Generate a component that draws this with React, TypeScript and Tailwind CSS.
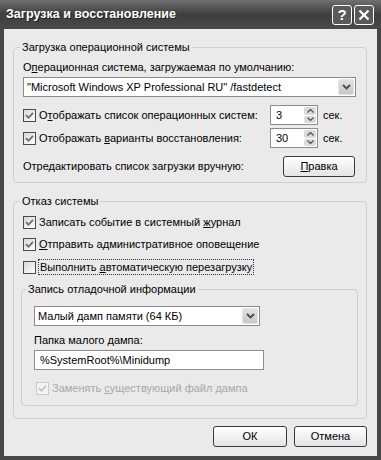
import React from "react";

function Check({ checked, disabled }: { checked?: boolean; disabled?: boolean }) {
  return (
    <span
      className={
        disabled
          ? "flex h-[13px] w-[13px] shrink-0 items-center justify-center border border-[#cacaca] bg-[#f3f3f3]"
          : "flex h-[13px] w-[13px] shrink-0 items-center justify-center border border-[#4a4a4a] bg-gradient-to-br from-[#d8d8d8] to-white"
      }
    >
      {checked && (
        <svg width="9" height="9" viewBox="0 0 9 9">
          <path
            d="M1 4.2 L3.5 6.8 L8 1.8"
            stroke={disabled ? "#c4c4c4" : "#6c6c6c"}
            strokeWidth="1.8"
            fill="none"
          />
        </svg>
      )}
    </span>
  );
}

function Combo({ text, width }: { text: string; width: string }) {
  return (
    <div className={`flex h-[20px] border border-[#8c8c8c] bg-white ${width}`}>
      <span className="flex-1 truncate pl-[3px] leading-[18px]">{text}</span>
      <span className="m-px flex w-[16px] items-center justify-center rounded-[2px] border border-[#e4e4e4] bg-gradient-to-b from-[#e2e2e2] to-[#c8c8c8]">
        <svg width="9" height="6" viewBox="0 0 9 6">
          <path d="M1 1 L4.5 4.5 L8 1" stroke="#4a4a4a" strokeWidth="1.8" fill="none" />
        </svg>
      </span>
    </div>
  );
}

function Spin({ value }: { value: string }) {
  return (
    <div className="flex h-[20px] w-[48px] border border-[#8c8c8c] bg-white">
      <span className="flex-1 pl-[5px] leading-[18px]">{value}</span>
      <div className="flex w-[14px] flex-col gap-px p-px">
        <span className="flex flex-1 items-center justify-center rounded-[2px] bg-[#dadada]">
          <svg width="7" height="4" viewBox="0 0 7 4">
            <path d="M0.5 3.5 L3.5 0.5 L6.5 3.5" stroke="#555" strokeWidth="1.3" fill="none" />
          </svg>
        </span>
        <span className="flex flex-1 items-center justify-center rounded-[2px] bg-[#dadada]">
          <svg width="7" height="4" viewBox="0 0 7 4">
            <path d="M0.5 0.5 L3.5 3.5 L6.5 0.5" stroke="#555" strokeWidth="1.3" fill="none" />
          </svg>
        </span>
      </div>
    </div>
  );
}

function Btn({ children, width }: { children: React.ReactNode; width: string }) {
  return (
    <div
      className={`flex h-[21px] items-center justify-center rounded-[3px] border border-[#3a3a3a] bg-gradient-to-b from-white to-[#e4e4e4] ${width}`}
    >
      {children}
    </div>
  );
}

export default function App() {
  return (
    <div className="flex h-[460px] w-[381px] flex-col overflow-hidden bg-[#474747] font-['Liberation_Sans',Arial,sans-serif] text-[11px] text-black">
      <div className="flex h-[29px] shrink-0 items-center bg-gradient-to-b from-[#707070] via-[#3e3e3e] to-[#4a4a4a] pl-[6px] pr-[7px]">
        <span className="flex-1 text-[12.5px] font-bold text-white [text-shadow:1px_1px_0_#222]">
          Загрузка и восстановление
        </span>
        <div className="flex gap-[2px]">
          <span className="flex h-[20px] w-[20px] items-center justify-center rounded-[3px] border border-white bg-[#5a5a5a] text-[15px] font-bold leading-none text-white">
            ?
          </span>
          <span className="flex h-[20px] w-[20px] items-center justify-center rounded-[3px] border border-white bg-[#5a5a5a]">
            <svg width="12" height="12" viewBox="0 0 12 12">
              <path d="M1.5 1.5 L10.5 10.5 M10.5 1.5 L1.5 10.5" stroke="white" strokeWidth="2.2" />
            </svg>
          </span>
        </div>
      </div>

      <div className="mx-[4px] mb-[4px] flex flex-1 flex-col bg-[#eaeaea]">
        <fieldset className="ml-[9px] mr-[10px] mt-[11px] rounded-[4px] border border-[#cfcfcf] pb-[5px] pl-[9px] pr-[10px]">
          <legend className="ml-[-3px] px-[2px] leading-[14px]">Загрузка операционной системы</legend>
          <div className="mt-[6px] leading-[14px]">
            О<span className="underline">п</span>ерационная система, загружаемая по умолчанию:
          </div>
          <div className="mt-[3px]">
            <Combo text={'"Microsoft Windows XP Professional RU" /fastdetect'} width="w-full" />
          </div>
          <div className="mt-[8px] flex items-center">
            <div className="flex w-[247px] items-center gap-[3px]">
              <Check checked />
              <span>
                О<span className="underline">т</span>ображать список операционных систем:
              </span>
            </div>
            <Spin value="3" />
            <span className="ml-[5px]">сек.</span>
          </div>
          <div className="mt-[3px] flex items-center">
            <div className="flex w-[247px] items-center gap-[3px]">
              <Check checked />
              <span>
                Отображать <span className="underline">в</span>арианты восстановления:
              </span>
            </div>
            <Spin value="30" />
            <span className="ml-[5px]">сек.</span>
          </div>
          <div className="mt-[8px] flex items-center justify-between pr-px">
            <span>Отредактировать список загрузки вручную:</span>
            <Btn width="w-[72px]">
              <span className="underline">П</span>равка
            </Btn>
          </div>
        </fieldset>

        <fieldset className="ml-[9px] mr-[10px] mt-[11px] rounded-[4px] border border-[#cfcfcf] pb-[12px] pl-[9px] pr-[8px]">
          <legend className="ml-[-3px] px-[2px] leading-[14px]">Отказ системы</legend>
          <div className="mt-[6px] flex h-[16px] items-center gap-[3px]">
            <Check checked />
            <span>
              Записать событие в системный <span className="underline">ж</span>урнал
            </span>
          </div>
          <div className="mt-[6px] flex h-[16px] items-center gap-[3px]">
            <Check checked />
            <span>
              <span className="underline">О</span>тправить административное оповещение
            </span>
          </div>
          <div className="mt-[7px] flex h-[16px] items-center gap-[2px]">
            <Check />
            <span className="border border-dotted border-[#333] px-px leading-[14px]">
              Выполнить <span className="underline">а</span>втоматическую перезагрузку
            </span>
          </div>
          <fieldset className="ml-[-2px] mt-[7px] rounded-[4px] border border-[#cfcfcf] pb-[9px] pl-[12px]">
            <legend className="ml-[-8px] px-[2px] leading-[14px]">Запись отладочной информации</legend>
            <div className="mt-[10px]">
              <Combo text="Малый дамп памяти (64 КБ)" width="w-[226px]" />
            </div>
            <div className="mt-[7px] leading-[14px]">Папка малого дампа:</div>
            <div className="mt-[3px] flex h-[20px] w-[230px] items-center border border-[#8c8c8c] bg-white pl-[5px]">
              %SystemRoot%\Minidump
            </div>
            <div className="ml-[2px] mt-[10px] flex h-[16px] items-center gap-[3px] text-[#a8a8a8]">
              <Check checked disabled />
              <span>
                Заменять <span className="underline">с</span>уществующий файл дампа
              </span>
            </div>
          </fieldset>
        </fieldset>

        <div className="mr-[10px] mt-[7px] flex justify-end gap-[7px]">
          <Btn width="w-[74px]">ОК</Btn>
          <Btn width="w-[73px]">Отмена</Btn>
        </div>
      </div>
    </div>
  );
}
